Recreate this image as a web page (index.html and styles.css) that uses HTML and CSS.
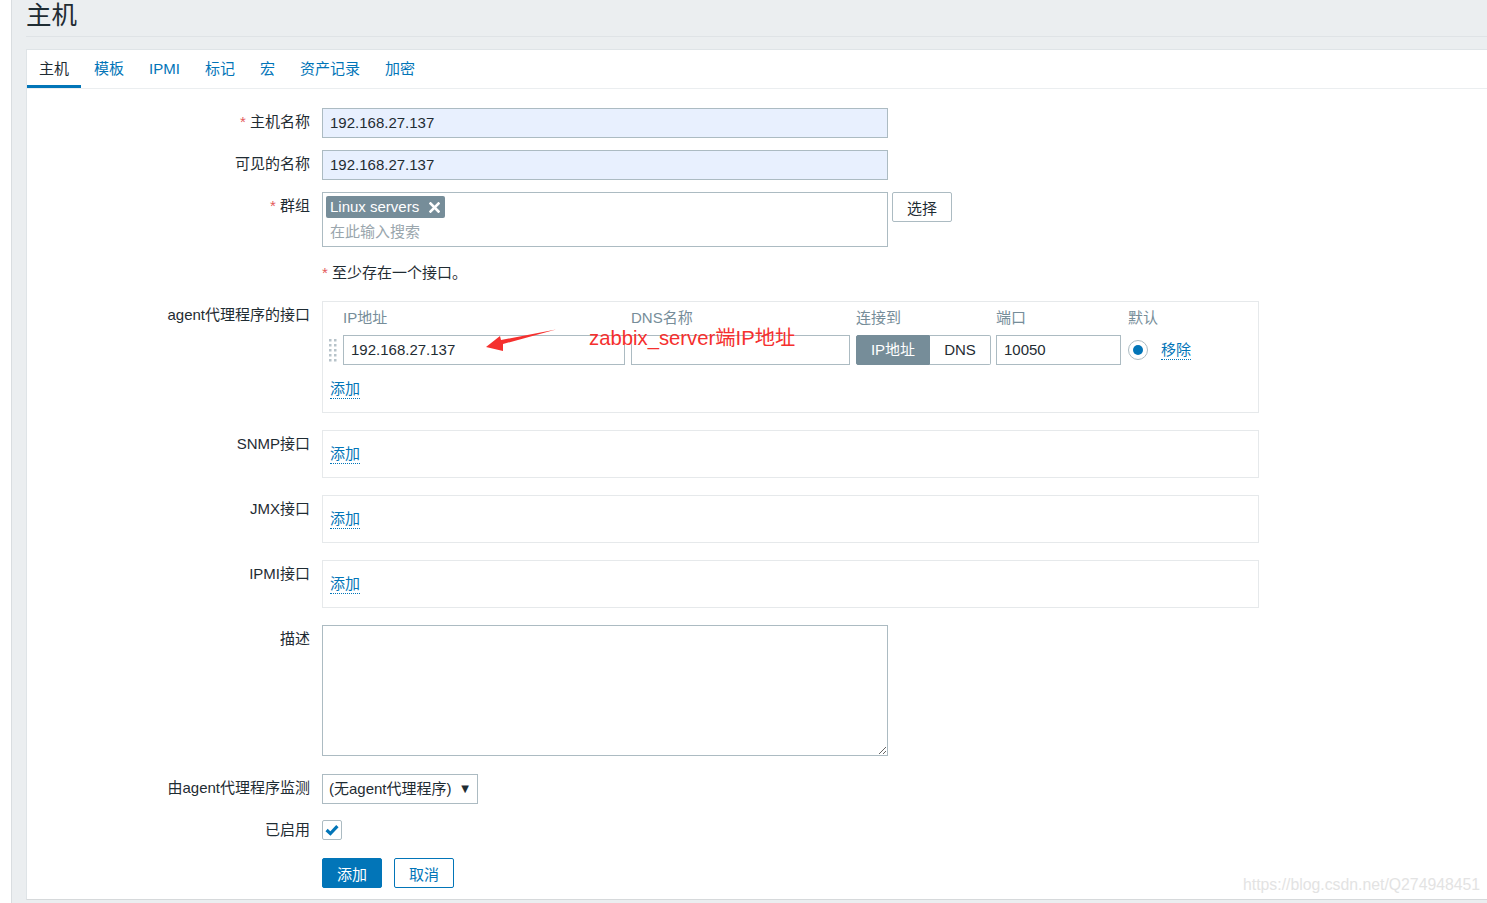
FILE: index.html
```html
<!DOCTYPE html>
<html lang="zh">
<head>
<meta charset="utf-8">
<title>主机</title>
<link rel="stylesheet" href="styles.css">
</head>
<body>
<div class="page">
  <aside class="sidebar"></aside>
  <main class="main">
    <header class="page-header"><h1>主机</h1></header>
    <section class="panel">
      <ul class="tabs">
        <li class="tab active">主机</li>
        <li class="tab">模板</li>
        <li class="tab">IPMI</li>
        <li class="tab">标记</li>
        <li class="tab">宏</li>
        <li class="tab">资产记录</li>
        <li class="tab">加密</li>
      </ul>
      <div class="form">
        <div class="row r-host">
          <label class="lbl"><span class="req">*</span> 主机名称</label>
          <div class="field"><div class="input filled">192.168.27.137</div></div>
        </div>
        <div class="row r-vis">
          <label class="lbl">可见的名称</label>
          <div class="field"><div class="input filled">192.168.27.137</div></div>
        </div>
        <div class="row r-group">
          <label class="lbl"><span class="req">*</span> 群组</label>
          <div class="field field-inline">
            <div class="multiselect">
              <span class="tag">Linux servers
                <svg class="tag-x" width="11" height="11" viewBox="0 0 11 11"><path d="M1.5 1.5 L9.5 9.5 M9.5 1.5 L1.5 9.5" stroke="#fff" stroke-width="2.6" stroke-linecap="square"/></svg>
              </span>
              <div class="placeholder">在此输入搜索</div>
            </div>
            <button class="btn-alt">选择</button>
          </div>
        </div>
        <div class="row r-err">
          <div class="lbl"></div>
          <div class="field err"><span class="req">*</span> 至少存在一个接口。</div>
        </div>
        <div class="row r-agent">
          <label class="lbl">agent代理程序的接口</label>
          <div class="field">
            <div class="iface agent">
              <div class="iface-grid">
                <div></div>
                <div class="th">IP地址</div>
                <div class="th">DNS名称</div>
                <div class="th">连接到</div>
                <div class="th">端口</div>
                <div class="th">默认</div>
                <div class="handle">
                  <svg width="8" height="23" viewBox="0 0 8 23">
                    <g fill="#b7c3ca">
                      <rect x="0" y="0" width="2.5" height="2.5"/><rect x="5" y="0" width="2.5" height="2.5"/>
                      <rect x="0" y="5" width="2.5" height="2.5"/><rect x="5" y="5" width="2.5" height="2.5"/>
                      <rect x="0" y="10" width="2.5" height="2.5"/><rect x="5" y="10" width="2.5" height="2.5"/>
                      <rect x="0" y="15" width="2.5" height="2.5"/><rect x="5" y="15" width="2.5" height="2.5"/>
                      <rect x="0" y="20" width="2.5" height="2.5"/><rect x="5" y="20" width="2.5" height="2.5"/>
                    </g>
                  </svg>
                </div>
                <div><div class="input w-ip">192.168.27.137</div></div>
                <div><div class="input w-dns"></div></div>
                <div class="seg">
                  <span class="seg-on">IP地址</span><span class="seg-off">DNS</span>
                </div>
                <div><div class="input w-port">10050</div></div>
                <div class="def">
                  <span class="radio"><span class="radio-dot"></span></span>
                  <span class="link">移除</span>
                </div>
              </div>
              <div class="add-row"><span class="link">添加</span></div>
            </div>
          </div>
        </div>
        <div class="row r-box">
          <label class="lbl">SNMP接口</label>
          <div class="field"><div class="iface simple"><span class="link">添加</span></div></div>
        </div>
        <div class="row r-box">
          <label class="lbl">JMX接口</label>
          <div class="field"><div class="iface simple"><span class="link">添加</span></div></div>
        </div>
        <div class="row r-box">
          <label class="lbl">IPMI接口</label>
          <div class="field"><div class="iface simple"><span class="link">添加</span></div></div>
        </div>
        <div class="row r-desc">
          <label class="lbl">描述</label>
          <div class="field"><textarea class="textarea"></textarea></div>
        </div>
        <div class="row r-proxy">
          <label class="lbl">由agent代理程序监测</label>
          <div class="field"><div class="select">(无agent代理程序)<span class="caret">▼</span></div></div>
        </div>
        <div class="row r-enabled">
          <label class="lbl lbl-tight">已启用</label>
          <div class="field">
            <span class="checkbox">
              <svg width="14" height="12" viewBox="0 0 14 12"><path d="M1.6 6 L5.4 9.6 L12.4 2.2" fill="none" stroke="#0275b8" stroke-width="3.2"/></svg>
            </span>
          </div>
        </div>
        <div class="row r-buttons">
          <div class="lbl"></div>
          <div class="field field-inline buttons">
            <button class="btn-main">添加</button>
            <button class="btn-cancel">取消</button>
          </div>
        </div>
      </div>
    </section>
  </main>
  <div class="annotation">zabbix_server端IP地址</div>
  <svg class="arrow" width="80" height="30" viewBox="480 325 80 30">
    <polygon points="486,347 500,336 501,340 556,329.5 503,344 503,351" fill="#f5302e"/>
  </svg>
  <div class="watermark">https://blog.csdn.net/Q274948451</div>
</div>
</body>
</html>
```

FILE: styles.css
```css
* { box-sizing: border-box; }

html, body {
  margin: 0;
  padding: 0;
  height: 903px;
  overflow: hidden;
}

body {
  font-family: "Liberation Sans", Arial, "Noto Sans CJK SC", sans-serif;
  font-size: 15px;
  color: #1f2c33;
  background: #ebeef0;
}

.page {
  position: relative;
  display: flex;
  height: 903px;
}

.sidebar {
  width: 12px;
  background: #ffffff;
  border-right: 1px solid #d9dde0;
  flex: none;
}

.main {
  flex: 1;
  display: flex;
  flex-direction: column;
  padding-left: 14px;
  padding-bottom: 3px;
  background: #ebeef0;
  min-width: 0;
}

.page-header {
  height: 37px;
  border-bottom: 1px solid #dfe3e6;
  margin-bottom: 12px;
}

.page-header h1 {
  margin: 0;
  font-family: "Liberation Sans", Arial, "Noto Sans CJK SC", sans-serif;
  font-weight: 400;
  font-size: 25.5px;
  line-height: 30px;
  color: #1f2c33;
}

.panel {
  flex: 1;
  background: #ffffff;
  border-top: 1px solid #dfe4e7;
  border-left: 1px solid #dfe4e7;
  border-bottom: 1px solid #d6d9db;
}

.tabs {
  list-style: none;
  margin: 0;
  padding: 0;
  display: flex;
  gap: 1px;
  border-bottom: 1px solid #ebeef0;
}

.tab {
  padding: 10px 12px 7px;
  line-height: 18px;
  color: #0275b8;
  border-bottom: 3px solid transparent;
}

.tab.active {
  color: #1f2c33;
  border-bottom-color: #0275b8;
}

.form {
  padding-top: 19px;
}

.row {
  display: grid;
  grid-template-columns: 283px 1fr;
  column-gap: 12px;
}

.lbl {
  text-align: right;
  padding-top: 5px;
  line-height: 18px;
  white-space: nowrap;
}

.lbl-tight { padding-top: 1px; }

.req { color: #e45959; }

.field-inline {
  display: flex;
  align-items: flex-start;
  gap: 4px;
}

.r-host, .r-vis, .r-group, .r-err { margin-bottom: 12px; }
.r-agent, .r-box { margin-bottom: 17px; }
.r-desc { margin-bottom: 18px; }
.r-proxy { margin-bottom: 16px; }
.r-enabled { margin-bottom: 18px; }

.input {
  height: 30px;
  width: 566px;
  border: 1px solid #acbbc2;
  background: #ffffff;
  padding: 0 7px;
  line-height: 28px;
  white-space: nowrap;
  overflow: hidden;
}

.input.filled { background: #e8f0fe; }

.multiselect {
  width: 566px;
  height: 55px;
  border: 1px solid #acbbc2;
  padding: 3px 3px 0;
}

.tag {
  display: inline-flex;
  align-items: center;
  height: 22px;
  padding: 0 5px 0 4px;
  background: #768d99;
  color: #ffffff;
  border-radius: 2px;
  line-height: 22px;
}

.tag-x { margin-left: 10px; }

.placeholder {
  color: #9aa6ad;
  padding-left: 4px;
  line-height: 18px;
  margin-top: 5px;
}

.btn-alt {
  height: 30px;
  width: 60px;
  border: 1px solid #acbbc2;
  border-radius: 2px;
  background: #ffffff;
  font: inherit;
  color: #1f2c33;
  padding: 0;
}

.err {
  height: 30px;
  line-height: 28px;
}

.iface {
  width: 937px;
  border: 1px solid #e6e9eb;
}

.iface.agent {
  padding: 7px 6px 13px;
}

.iface-grid {
  display: grid;
  grid-template-columns: 14px 288px 225px 140px 132px 1fr;
  grid-template-rows: 18px 30px;
  row-gap: 8px;
  align-items: center;
}

.th {
  color: #768d99;
  line-height: 18px;
}

.handle { display: flex; align-items: center; height: 30px; }
.handle svg { display: block; }

.w-ip { width: 282px; }
.w-dns { width: 219px; }
.w-port { width: 125px; }

.seg {
  display: flex;
  width: 135px;
  height: 30px;
}

.seg-on {
  width: 74px;
  background: #768d99;
  color: #ffffff;
  border: 1px solid #768d99;
  border-radius: 2px 0 0 2px;
  text-align: center;
  line-height: 28px;
}

.seg-off {
  flex: 1;
  border: 1px solid #acbbc2;
  border-left: none;
  border-radius: 0 2px 2px 0;
  text-align: center;
  line-height: 28px;
}

.def {
  display: flex;
  align-items: center;
  gap: 13px;
}

.radio {
  width: 20px;
  height: 20px;
  border: 1px solid #acbbc2;
  border-radius: 50%;
  display: flex;
  align-items: center;
  justify-content: center;
  background: #ffffff;
}

.radio-dot {
  width: 10px;
  height: 10px;
  border-radius: 50%;
  background: #0275b8;
}

.link {
  display: inline-block;
  color: #0275b8;
  line-height: 18px;
  border-bottom: 1px dotted #0275b8;
}

.add-row {
  margin-top: 15px;
  padding-left: 1px;
}

.iface.simple {
  height: 48px;
  padding: 14px 7px 0;
}

.textarea {
  display: block;
  width: 566px;
  height: 131px;
  border: 1px solid #acbbc2;
  margin: 0;
  padding: 5px 7px;
  resize: vertical;
  font: inherit;
  background: #ffffff;
}

.select {
  position: relative;
  width: 156px;
  height: 30px;
  border: 1px solid #acbbc2;
  padding: 0 6px;
  line-height: 28px;
  white-space: nowrap;
}

.caret {
  position: absolute;
  right: 8px;
  top: 0;
  font-size: 10px;
  color: #1f2c33;
  font-family: "DejaVu Sans", sans-serif;
}

.checkbox {
  display: flex;
  align-items: center;
  justify-content: center;
  width: 20px;
  height: 20px;
  border: 1px solid #acbbc2;
  border-radius: 2px;
  background: #ffffff;
}

.buttons { gap: 12px; }

.btn-main, .btn-cancel {
  height: 30px;
  width: 60px;
  border-radius: 2px;
  font: inherit;
  padding: 0;
}

.btn-main {
  background: #0275b8;
  border: 1px solid #0275b8;
  color: #ffffff;
}

.btn-cancel {
  background: #ffffff;
  border: 1px solid #0275b8;
  color: #0275b8;
}

.annotation {
  position: absolute;
  left: 589px;
  top: 325px;
  font-size: 20.3px;
  line-height: 26px;
  color: #f5302e;
  white-space: nowrap;
}

.arrow {
  position: absolute;
  left: 480px;
  top: 325px;
}

.watermark {
  position: absolute;
  left: 1243px;
  top: 876px;
  font-size: 15.8px;
  line-height: 18px;
  color: #e3e3e3;
  white-space: nowrap;
}
```
